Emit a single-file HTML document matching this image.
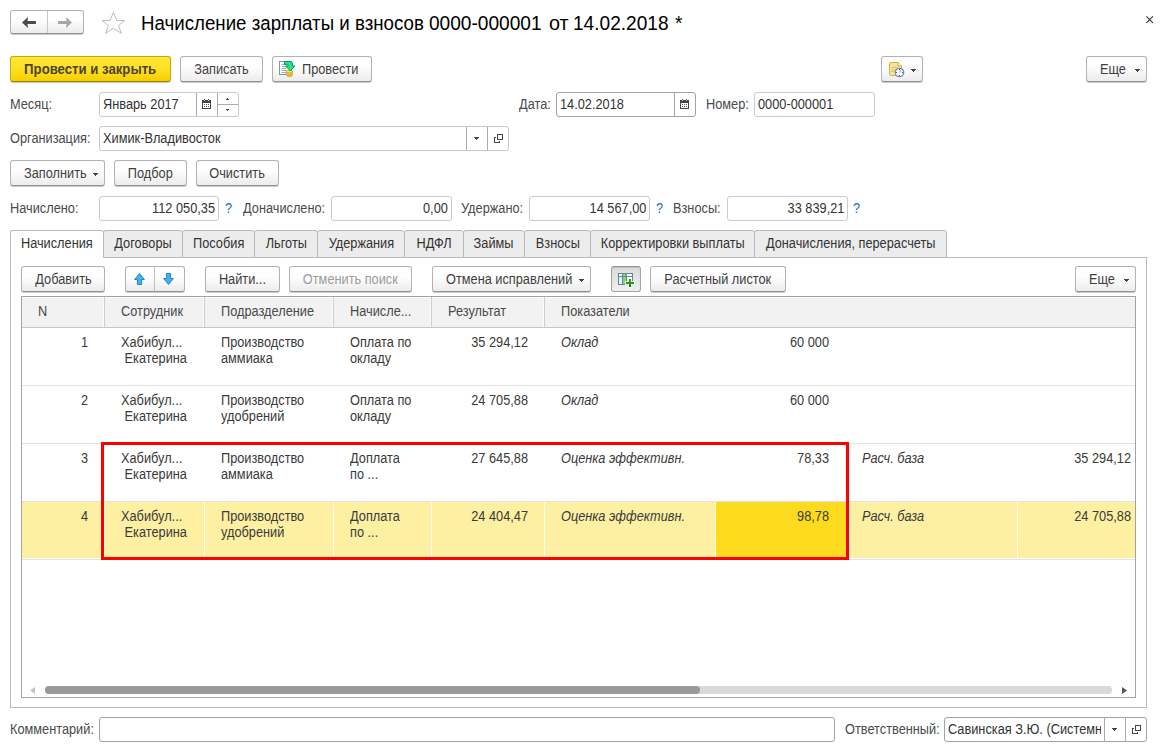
<!DOCTYPE html>
<html><head><meta charset="utf-8"><title>1C</title>
<style>
*{box-sizing:border-box;margin:0;padding:0}
html,body{width:1163px;height:751px;overflow:hidden;background:#fff}
body{font-family:"Liberation Sans",sans-serif;font-size:13.8px;color:#444;position:relative;letter-spacing:0}
.a{position:absolute;white-space:nowrap}
svg{position:absolute;overflow:visible}
.btn{position:absolute;height:26px;border:1px solid #b2b2b2;border-bottom-color:#919191;border-radius:3px;background:linear-gradient(#ffffff 0%,#fefefe 40%,#ececec 100%);box-shadow:0 1px 0 rgba(0,0,0,.2);color:#3f3f3f;font-size:13.8px;line-height:26px;text-align:center;white-space:nowrap}
.btn.y{background:linear-gradient(#ffe63c 0%,#ffe11f 50%,#f6cf00 100%);border-color:#c9a800;border-bottom-color:#9d8400;font-weight:bold;color:#4b4538;letter-spacing:0}
.btn.dis{color:#9c9c9c}
.btn.l{text-align:left;padding-left:13px}
.btn.prs{background:linear-gradient(#dadada,#efefef);border-color:#a3a3a3;border-top-color:#8f8f8f;box-shadow:inset 0 1px 1px rgba(0,0,0,.12)}
.fld{position:absolute;height:25px;border:1px solid #cbcbcb;border-radius:3px;background:#fff;color:#333;font-size:13.8px;line-height:23px;padding:0 3px;white-space:nowrap;overflow:hidden}
.fld.r{text-align:right}
.fld.f{border-color:#a2a2a2}
.dv{position:absolute;width:1px;height:23px;background:#ababab}
.lbl{position:absolute;font-size:13.8px;line-height:25px;color:#4a4a4a;white-space:nowrap}
.q{position:absolute;font-size:13.8px;line-height:25px;color:#1a6fc0}
.tab{position:absolute;top:230px;height:28px;border:1px solid #b9b9b9;background:#ececec;color:#333;font-size:13.8px;line-height:26px;text-align:center;white-space:nowrap;border-radius:3px 3px 0 0}
.tab.act{background:#fff;border-bottom:none}
.car{position:absolute;width:0;height:0;border-left:3px solid transparent;border-right:3px solid transparent;border-top:3px solid #444}
.hd{font-size:13.8px;line-height:29px;color:#4a4a4a}
.cell{position:absolute;font-size:13.8px;line-height:16px;color:#3a3a3a;white-space:nowrap}
.i{font-style:italic}
.t{display:inline-block;transform:scaleX(.925);transform-origin:50% 50%}
.btn.l .t,.fld .t{transform-origin:0 50%}
.fld.r .t{transform-origin:100% 50%}
.btn.y .t{transform:scaleX(.955)}
.lbl,.hd,.cell,.q{transform:scaleX(.925);transform-origin:0 0}
.cell.rt{transform-origin:100% 0;text-align:right}
</style></head><body>
<div class="btn " style="left:10px;top:10px;width:74px;height:24px"></div>
<div class="a" style="left:47px;top:11px;width:1px;height:22px;background:#c6c6c6"></div>
<svg style="left:21px;top:17px" width="16" height="12"><path d="M1 5.5 L7 0 L6.5 3.9 L14.9 3.9 L14.9 7.1 L6.5 7.1 L7 11 Z" fill="#4a4a4a"/></svg>
<svg style="left:57px;top:17px" width="16" height="12"><path d="M15 5.5 L9 0 L9.5 3.9 L1 3.9 L1 7.1 L9.5 7.1 L9 11 Z" fill="#a6a6a6"/></svg>
<svg style="left:101px;top:11px" width="25" height="24"><path d="M12.4 1.4 L15.8 9.5 L23.7 9.5 L17.5 14.6 L20.4 22.3 L12.4 17.2 L4.6 22.3 L7.4 14.6 L1.2 9.5 L9 9.5 Z" fill="none" stroke="#b4bcc6" stroke-width="1"/></svg>
<div class="a" style="left:141px;top:10px;font-size:20px;line-height:27px;color:#000;letter-spacing:0;transform:scaleX(.935);transform-origin:0 0">Начисление зарплаты и взносов</div>
<div class="a" style="left:428.5px;top:10px;font-size:20px;line-height:27px;color:#000;letter-spacing:0;transform-origin:0 0;transform:scaleX(.955)">0000-000001</div>
<div class="a" style="left:548.6px;top:10px;font-size:20px;line-height:27px;color:#000;letter-spacing:0;transform-origin:0 0;transform:scaleX(.99)">от</div>
<div class="a" style="left:572.6px;top:10px;font-size:20px;line-height:27px;color:#000;letter-spacing:0;transform-origin:0 0;transform:scaleX(.955)">14.02.2018</div>
<div class="a" style="left:675px;top:10px;font-size:20px;line-height:27px;color:#000;letter-spacing:0;transform-origin:0 0;transform:scaleX(.955)">*</div>
<svg style="left:1146px;top:16px" width="8" height="8"><path d="M0.4 0.4 L6.9 6.9 M6.9 0.4 L0.4 6.9" stroke="#333" stroke-width="1.1"/></svg>
<div class="btn y" style="left:10px;top:56px;width:161px;"><span class="t">Провести и закрыть</span></div>
<div class="btn " style="left:180px;top:56px;width:83px;"><span class="t">Записать</span></div>
<div class="btn l" style="left:272px;top:56px;width:100px;padding-left:29px"><span class="t">Провести</span></div>
<svg style="left:278px;top:60px" width="18" height="18"><rect x="1.5" y="1.5" width="12" height="13" fill="#fff" stroke="#7d92ab"/><path d="M3.5 4.5H8M3.5 6.5H8M3.5 8.5H8M3.5 10.5H9M3.5 12.5H9" stroke="#9fb0c6" stroke-width="1"/><path d="M8.6 11.6 v3.8 a2.9 1.2 0 0 0 5.8 0 v-3.8 z" fill="#f3d84e" stroke="#c9a520" stroke-width=".7"/><path d="M8.6 13 a2.9 1.2 0 0 0 5.8 0 M8.6 14.3 a2.9 1.2 0 0 0 5.8 0" fill="none" stroke="#c9a520" stroke-width=".7"/><ellipse cx="11.5" cy="11.6" rx="2.9" ry="1.2" fill="#f9e777" stroke="#c9a520" stroke-width=".7"/><path d="M6.5 1.5 L12 1.5 Q14.6 1.5 14.6 4 L14.6 6 L17 6 L12.2 10.8 L7.4 6 L10 6 L10 5 Q10 4.4 9.3 4.4 L6.5 4.4 Z" fill="#20e38c" stroke="#0b9e52" stroke-width="1" stroke-linejoin="round"/></svg>
<div class="btn " style="left:881px;top:56px;width:42px;"></div>
<svg style="left:888px;top:61px" width="18" height="18"><path d="M1.5 2.5 Q1.5 1.5 2.5 1.5 L10 1.5 L13.5 5 L13.5 13.5 Q13.5 14.5 12.5 14.5 L2.5 14.5 Q1.5 14.5 1.5 13.5 Z" fill="#f6e393" stroke="#d5b145"/><path d="M10 1.5 V5 H13.5" fill="#fbf0bd" stroke="#d5b145"/><path d="M3.5 6.5H5.5M6.5 6.5H9M3.5 8.5H4.5M5.5 8.5H7.5M3.5 10.5H6" stroke="#d9bb58" stroke-width="1"/><circle cx="11.5" cy="11.5" r="4.2" fill="#fff" stroke="#5b92cc" stroke-width="1.3"/><path d="M11.5 11.5 L13 9.3" stroke="#8db4e0" stroke-width="1.2"/><rect x="11" y="8" width="1" height="1" fill="#e8141c"/><rect x="14" y="11" width="1" height="1" fill="#e8141c"/><rect x="11" y="14" width="1" height="1" fill="#e8141c"/><rect x="8" y="11" width="1" height="1" fill="#e8141c"/></svg>
<svg style="left:911px;top:69px" width="5" height="3" shape-rendering="crispEdges"><rect x="0" y="0" width="5" height="1" fill="#444"/><rect x="1" y="1" width="3" height="1" fill="#444"/><rect x="2" y="2" width="1" height="1" fill="#444"/></svg>
<div class="btn l" style="left:1086px;top:56px;width:61px;"><span class="t">Еще</span></div>
<svg style="left:1135px;top:69px" width="5" height="3" shape-rendering="crispEdges"><rect x="0" y="0" width="5" height="1" fill="#444"/><rect x="1" y="1" width="3" height="1" fill="#444"/><rect x="2" y="2" width="1" height="1" fill="#444"/></svg>
<div class="lbl" style="left:10px;top:92px">Месяц:</div>
<div class="fld " style="left:99px;top:92px;width:140px;"><span class="t">Январь 2017</span></div>
<div class="a" style="left:196px;top:93px;width:1px;height:23px;background:#ababab"></div>
<div class="a" style="left:217px;top:93px;width:1px;height:23px;background:#ababab"></div>
<div class="a" style="left:218px;top:104px;width:20px;height:1px;background:#ababab"></div>
<svg style="left:202px;top:99px" width="9" height="10" shape-rendering="crispEdges"><rect x="0" y="1" width="9" height="9" fill="#444"/><rect x="1" y="4" width="7" height="5" fill="#fff"/><rect x="2" y="0" width="1" height="1" fill="#555"/><rect x="6" y="0" width="1" height="1" fill="#555"/><rect x="2" y="1" width="1" height="1" fill="#ccc"/><rect x="6" y="1" width="1" height="1" fill="#ccc"/><rect x="2" y="5" width="1" height="1" fill="#555"/><rect x="2" y="7" width="1" height="1" fill="#555"/><rect x="4" y="5" width="1" height="1" fill="#555"/><rect x="4" y="7" width="1" height="1" fill="#555"/><rect x="6" y="5" width="1" height="1" fill="#555"/><rect x="6" y="7" width="1" height="1" fill="#555"/></svg>
<svg style="left:226px;top:98px" width="3" height="2" shape-rendering="crispEdges"><rect x="1" y="0" width="1" height="1" fill="#444"/><rect x="0" y="1" width="3" height="1" fill="#444"/></svg>
<svg style="left:226px;top:109px" width="3" height="2" shape-rendering="crispEdges"><rect x="0" y="0" width="3" height="1" fill="#444"/><rect x="1" y="1" width="1" height="1" fill="#444"/></svg>
<div class="lbl" style="left:519px;top:92px">Дата:</div>
<div class="fld f" style="left:556px;top:92px;width:140px;"><span class="t">14.02.2018</span></div>
<div class="a" style="left:674px;top:93px;width:1px;height:23px;background:#a2a2a2"></div>
<svg style="left:680px;top:99px" width="9" height="10" shape-rendering="crispEdges"><rect x="0" y="1" width="9" height="9" fill="#444"/><rect x="1" y="4" width="7" height="5" fill="#fff"/><rect x="2" y="0" width="1" height="1" fill="#555"/><rect x="6" y="0" width="1" height="1" fill="#555"/><rect x="2" y="1" width="1" height="1" fill="#ccc"/><rect x="6" y="1" width="1" height="1" fill="#ccc"/><rect x="2" y="5" width="1" height="1" fill="#555"/><rect x="2" y="7" width="1" height="1" fill="#555"/><rect x="4" y="5" width="1" height="1" fill="#555"/><rect x="4" y="7" width="1" height="1" fill="#555"/><rect x="6" y="5" width="1" height="1" fill="#555"/><rect x="6" y="7" width="1" height="1" fill="#555"/></svg>
<div class="lbl" style="left:706px;top:92px">Номер:</div>
<div class="fld " style="left:754px;top:92px;width:121px;"><span class="t">0000-000001</span></div>
<div class="lbl" style="left:10px;top:126px">Организация:</div>
<div class="fld " style="left:99px;top:126px;width:410px;"><span class="t">Химик-Владивосток</span></div>
<div class="a" style="left:466px;top:127px;width:1px;height:23px;background:#ababab"></div>
<div class="a" style="left:487px;top:127px;width:1px;height:23px;background:#ababab"></div>
<svg style="left:474px;top:137px" width="5" height="3" shape-rendering="crispEdges"><rect x="0" y="0" width="5" height="1" fill="#444"/><rect x="1" y="1" width="3" height="1" fill="#444"/><rect x="2" y="2" width="1" height="1" fill="#444"/></svg>
<svg style="left:494px;top:134px" width="9" height="9" shape-rendering="crispEdges"><rect x="3.5" y="0.5" width="5" height="5" fill="none" stroke="#444"/><path d="M2 3.5 H0.5 V8.5 H5.5 V7" fill="none" stroke="#444"/></svg>
<div class="btn l" style="left:10px;top:160px;width:95px;"><span class="t">Заполнить</span></div>
<svg style="left:93px;top:173px" width="5" height="3" shape-rendering="crispEdges"><rect x="0" y="0" width="5" height="1" fill="#444"/><rect x="1" y="1" width="3" height="1" fill="#444"/><rect x="2" y="2" width="1" height="1" fill="#444"/></svg>
<div class="btn " style="left:114px;top:160px;width:73px;"><span class="t">Подбор</span></div>
<div class="btn " style="left:196px;top:160px;width:83px;"><span class="t">Очистить</span></div>
<div class="lbl" style="left:10px;top:196px">Начислено:</div>
<div class="fld r" style="left:99px;top:196px;width:120px;"><span class="t">112 050,35</span></div>
<div class="q" style="left:225px;top:196px">?</div>
<div class="lbl" style="left:243px;top:196px">Доначислено:</div>
<div class="fld r" style="left:331px;top:196px;width:121px;"><span class="t">0,00</span></div>
<div class="lbl" style="left:461px;top:196px">Удержано:</div>
<div class="fld r" style="left:529px;top:196px;width:121px;"><span class="t">14 567,00</span></div>
<div class="q" style="left:656px;top:196px">?</div>
<div class="lbl" style="left:673px;top:196px">Взносы:</div>
<div class="fld r" style="left:727px;top:196px;width:121px;"><span class="t">33 839,21</span></div>
<div class="q" style="left:853px;top:196px">?</div>
<div class="a" style="left:10px;top:257px;width:1137px;height:451px;border:1px solid #b9b9b9;background:#fff"></div>
<div class="tab act" style="left:10px;width:94px"><span class="t">Начисления</span></div>
<div class="tab" style="left:103px;width:80px"><span class="t">Договоры</span></div>
<div class="tab" style="left:182px;width:73px"><span class="t">Пособия</span></div>
<div class="tab" style="left:254px;width:64px"><span class="t">Льготы</span></div>
<div class="tab" style="left:317px;width:88px"><span class="t">Удержания</span></div>
<div class="tab" style="left:404px;width:60px"><span class="t">НДФЛ</span></div>
<div class="tab" style="left:463px;width:62px"><span class="t">Займы</span></div>
<div class="tab" style="left:524px;width:67px"><span class="t">Взносы</span></div>
<div class="tab" style="left:590px;width:165px"><span class="t">Корректировки выплаты</span></div>
<div class="tab" style="left:754px;width:193px"><span class="t">Доначисления, перерасчеты</span></div>
<div class="btn " style="left:21px;top:266px;width:84px;"><span class="t">Добавить</span></div>
<div class="btn " style="left:125px;top:266px;width:60px;"></div>
<div class="a" style="left:154px;top:267px;width:1px;height:24px;background:#c0c0c0"></div>
<svg style="left:134px;top:273px" width="11" height="12"><path d="M5.5 0.6 L10.4 6.5 L7.6 6.5 L7.6 11.5 L3.4 11.5 L3.4 6.5 L0.6 6.5 Z" fill="#42b0ef" stroke="#1c86c9" stroke-linejoin="round"/></svg>
<svg style="left:163px;top:273px" width="11" height="12"><path d="M5.5 11.4 L10.4 5.5 L7.6 5.5 L7.6 0.5 L3.4 0.5 L3.4 5.5 L0.6 5.5 Z" fill="#42b0ef" stroke="#1c86c9" stroke-linejoin="round"/></svg>
<div class="btn " style="left:205px;top:266px;width:75px;"><span class="t">Найти...</span></div>
<div class="btn dis" style="left:289px;top:266px;width:123px;"><span class="t">Отменить поиск</span></div>
<div class="btn l" style="left:432px;top:266px;width:159px;"><span class="t">Отмена исправлений</span></div>
<svg style="left:579px;top:279px" width="5" height="3" shape-rendering="crispEdges"><rect x="0" y="0" width="5" height="1" fill="#444"/><rect x="1" y="1" width="3" height="1" fill="#444"/><rect x="2" y="2" width="1" height="1" fill="#444"/></svg>
<div class="btn prs" style="left:611px;top:266px;width:30px;"></div>
<svg style="left:618px;top:273px" width="17" height="15"><g shape-rendering="crispEdges"><rect x="0.5" y="0.5" width="14" height="11" fill="#fff" stroke="#5f87a3"/><rect x="1" y="4" width="3" height="7" fill="#e6eef6"/><rect x="5" y="1" width="3" height="10" fill="#8cd463"/><path d="M0 3.5H15M4.5 0V12M8.5 0V12" stroke="#5f87a3"/><rect x="7" y="8" width="10" height="4" fill="#fff" fill-opacity=".75"/><rect x="10" y="5" width="4" height="10" fill="#fff" fill-opacity=".75"/><rect x="8" y="9" width="8" height="2" fill="#2c9a14"/><rect x="11" y="6" width="2" height="8" fill="#2c9a14"/><rect x="11" y="12" width="2" height="2" fill="#1c7008"/></g></svg>
<div class="btn " style="left:650px;top:266px;width:136px;"><span class="t">Расчетный листок</span></div>
<div class="btn l" style="left:1075px;top:266px;width:61px;"><span class="t">Еще</span></div>
<svg style="left:1124px;top:279px" width="5" height="3" shape-rendering="crispEdges"><rect x="0" y="0" width="5" height="1" fill="#444"/><rect x="1" y="1" width="3" height="1" fill="#444"/><rect x="2" y="2" width="1" height="1" fill="#444"/></svg>
<div class="a" style="left:21px;top:296px;width:1115px;height:402px;border:1px solid #a2a2a2;background:#fff"></div>
<div class="a" style="left:22px;top:298px;width:1113px;height:30px;background:#f2f2f2;border-bottom:1px solid #c6c6c6"></div>
<div class="a" style="left:103px;top:298px;width:1px;height:29px;background:#fcfcfc"></div><div class="a" style="left:104px;top:297px;width:1px;height:30px;background:#cdcdcd"></div>
<div class="a" style="left:203px;top:298px;width:1px;height:29px;background:#fcfcfc"></div><div class="a" style="left:204px;top:297px;width:1px;height:30px;background:#cdcdcd"></div>
<div class="a" style="left:332px;top:298px;width:1px;height:29px;background:#fcfcfc"></div><div class="a" style="left:333px;top:297px;width:1px;height:30px;background:#cdcdcd"></div>
<div class="a" style="left:430px;top:298px;width:1px;height:29px;background:#fcfcfc"></div><div class="a" style="left:431px;top:297px;width:1px;height:30px;background:#cdcdcd"></div>
<div class="a" style="left:543px;top:298px;width:1px;height:29px;background:#fcfcfc"></div><div class="a" style="left:544px;top:297px;width:1px;height:30px;background:#cdcdcd"></div>
<div class="a hd" style="left:38px;top:297px">N</div>
<div class="a hd" style="left:121px;top:297px">Сотрудник</div>
<div class="a hd" style="left:221px;top:297px">Подразделение</div>
<div class="a hd" style="left:350px;top:297px">Начисле...</div>
<div class="a hd" style="left:448px;top:297px">Результат</div>
<div class="a hd" style="left:561px;top:297px">Показатели</div>
<div class="a" style="left:22px;top:502px;width:1113px;height:56px;background:#fef0a2"></div>
<div class="a" style="left:104px;top:502px;width:1px;height:56px;background:#fffdf2"></div>
<div class="a" style="left:204px;top:502px;width:1px;height:56px;background:#fffdf2"></div>
<div class="a" style="left:333px;top:502px;width:1px;height:56px;background:#fffdf2"></div>
<div class="a" style="left:431px;top:502px;width:1px;height:56px;background:#fffdf2"></div>
<div class="a" style="left:544px;top:502px;width:1px;height:56px;background:#fffdf2"></div>
<div class="a" style="left:715px;top:502px;width:1px;height:56px;background:#fffdf2"></div>
<div class="a" style="left:849px;top:502px;width:1px;height:56px;background:#fffdf2"></div>
<div class="a" style="left:1017px;top:502px;width:1px;height:56px;background:#fffdf2"></div>
<div class="a" style="left:716px;top:502px;width:133px;height:56px;background:#fcdb1f"></div>
<div class="a" style="left:22px;top:385px;width:1113px;height:1px;background:#e3e3e3"></div>
<div class="a" style="left:22px;top:443px;width:1113px;height:1px;background:#e3e3e3"></div>
<div class="a" style="left:22px;top:501px;width:1113px;height:1px;background:#e3e3e3"></div>
<div class="a" style="left:22px;top:559px;width:1113px;height:1px;background:#e3e3e3"></div>
<div class="cell rt" style="left:40px;width:48px;top:335px">1</div>
<div class="cell" style="left:121px;top:335px">Хабибул...<br>&nbsp;Екатерина</div>
<div class="cell" style="left:221px;top:335px">Производство<br>аммиака</div>
<div class="cell" style="left:350px;top:335px">Оплата по<br>окладу</div>
<div class="cell rt" style="left:437px;width:91px;top:335px">35 294,12</div>
<div class="cell i" style="left:561px;top:335px">Оклад</div>
<div class="cell rt" style="left:729px;width:100px;top:335px">60 000</div>
<div class="cell rt" style="left:40px;width:48px;top:393px">2</div>
<div class="cell" style="left:121px;top:393px">Хабибул...<br>&nbsp;Екатерина</div>
<div class="cell" style="left:221px;top:393px">Производство<br>удобрений</div>
<div class="cell" style="left:350px;top:393px">Оплата по<br>окладу</div>
<div class="cell rt" style="left:437px;width:91px;top:393px">24 705,88</div>
<div class="cell i" style="left:561px;top:393px">Оклад</div>
<div class="cell rt" style="left:729px;width:100px;top:393px">60 000</div>
<div class="cell rt" style="left:40px;width:48px;top:451px">3</div>
<div class="cell" style="left:121px;top:451px">Хабибул...<br>&nbsp;Екатерина</div>
<div class="cell" style="left:221px;top:451px">Производство<br>аммиака</div>
<div class="cell" style="left:350px;top:451px">Доплата<br>по ...</div>
<div class="cell rt" style="left:437px;width:91px;top:451px">27 645,88</div>
<div class="cell i" style="left:561px;top:451px">Оценка эффективн.</div>
<div class="cell rt" style="left:729px;width:100px;top:451px">78,33</div>
<div class="cell i" style="left:862px;top:451px">Расч. база</div>
<div class="cell rt" style="left:1031px;width:100px;top:451px">35 294,12</div>
<div class="cell rt" style="left:40px;width:48px;top:509px">4</div>
<div class="cell" style="left:121px;top:509px">Хабибул...<br>&nbsp;Екатерина</div>
<div class="cell" style="left:221px;top:509px">Производство<br>удобрений</div>
<div class="cell" style="left:350px;top:509px">Доплата<br>по ...</div>
<div class="cell rt" style="left:437px;width:91px;top:509px">24 404,47</div>
<div class="cell i" style="left:561px;top:509px">Оценка эффективн.</div>
<div class="cell rt" style="left:729px;width:100px;top:509px">98,78</div>
<div class="cell i" style="left:862px;top:509px">Расч. база</div>
<div class="cell rt" style="left:1031px;width:100px;top:509px">24 705,88</div>
<div class="a" style="left:101px;top:442px;width:748px;height:118px;border:3px solid #ff0000"></div>
<div class="a" style="left:45px;top:686px;width:1067px;height:8px;border-radius:4px;background:#d9d9d9"></div>
<div class="a" style="left:45px;top:686px;width:655px;height:8px;border-radius:4px;background:#999"></div>
<svg style="left:30px;top:687px" width="5" height="7"><path d="M5 0 L0 3.5 L5 7 Z" fill="#c4c4c4"/></svg>
<svg style="left:1122px;top:687px" width="5" height="7"><path d="M0 0 L5 3.5 L0 7 Z" fill="#555"/></svg>
<div class="lbl" style="left:10px;top:717px">Комментарий:</div>
<div class="fld f" style="left:99px;top:717px;width:736px;"></div>
<div class="lbl" style="left:845px;top:717px">Ответственный:</div>
<div class="fld f" style="left:944px;top:717px;width:203px;"></div>
<div class="a" style="left:948px;top:718px;width:153px;height:23px;overflow:hidden"><div class="lbl" style="left:0;top:0;line-height:23px;color:#333">Савинская З.Ю. (Системный</div></div>
<div class="a" style="left:1104px;top:718px;width:1px;height:23px;background:#ababab"></div>
<div class="a" style="left:1125px;top:718px;width:1px;height:23px;background:#ababab"></div>
<svg style="left:1112px;top:728px" width="5" height="3" shape-rendering="crispEdges"><rect x="0" y="0" width="5" height="1" fill="#444"/><rect x="1" y="1" width="3" height="1" fill="#444"/><rect x="2" y="2" width="1" height="1" fill="#444"/></svg>
<svg style="left:1132px;top:725px" width="9" height="9" shape-rendering="crispEdges"><rect x="3.5" y="0.5" width="5" height="5" fill="none" stroke="#444"/><path d="M2 3.5 H0.5 V8.5 H5.5 V7" fill="none" stroke="#444"/></svg>
</body></html>
